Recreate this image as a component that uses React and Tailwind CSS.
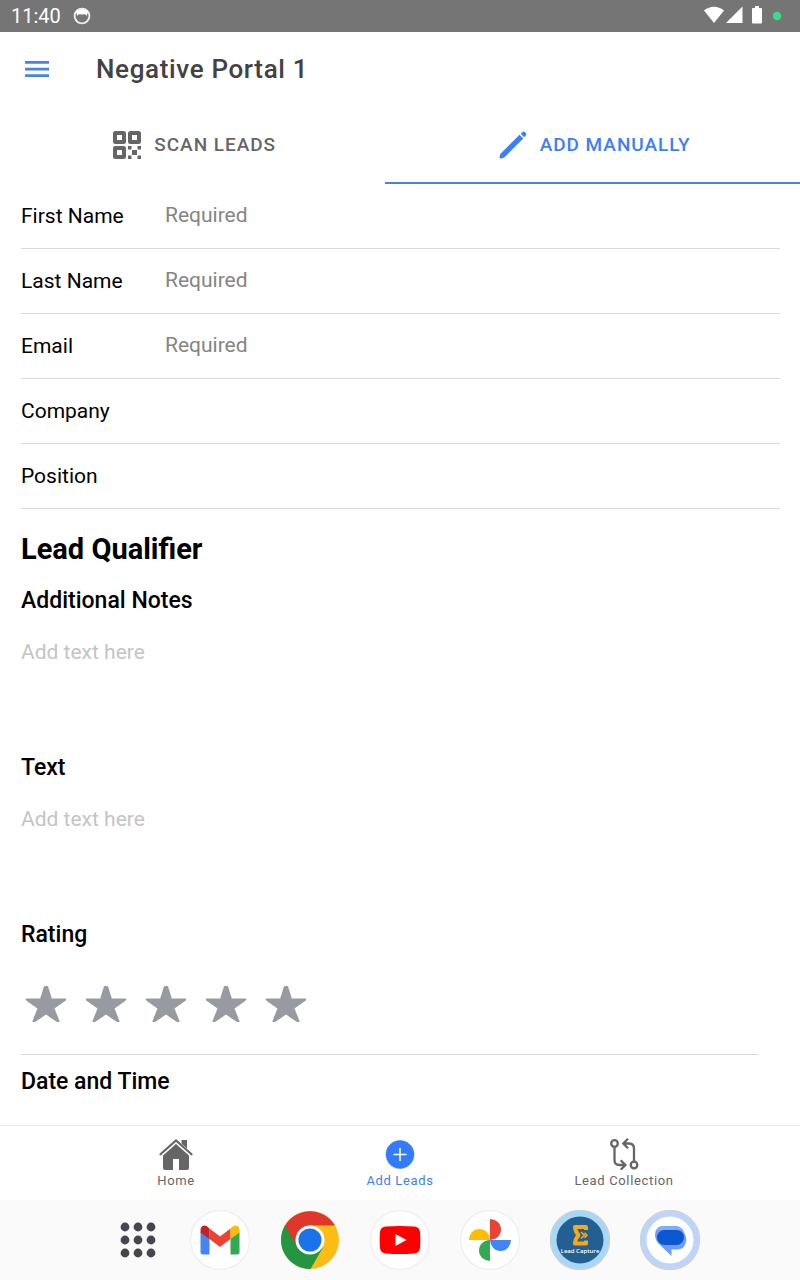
import { useState } from 'react';

const FIELDS = [
  { id: 'firstName', label: 'First Name', placeholder: 'Required', type: 'text' },
  { id: 'lastName', label: 'Last Name', placeholder: 'Required', type: 'text' },
  { id: 'email', label: 'Email', placeholder: 'Required', type: 'email' },
  { id: 'company', label: 'Company', placeholder: '', type: 'text' },
  { id: 'position', label: 'Position', placeholder: '', type: 'text' }
];

const StatusBar = () => (
  <div className="flex h-8 shrink-0 items-center bg-[#757575] pr-4 pl-[11px] text-white">
    <span className="text-[20px] leading-6">11:40</span>
    <svg className="ml-[11px] h-5 w-5" viewBox="0 0 20 20" fill="none">
      <circle cx="10" cy="10" r="7.4" stroke="#ececec" strokeWidth="1.9" />
      <path d="M4 5.500Q10 .5 16 5.500L14.800 10Q14 8 12.500 8.200L10 8.500 7.500 8.200Q6 8 5.200 10Z" fill="#fff" />
    </svg>
    <svg className="ml-auto h-5 w-20" viewBox="0 0 80 20" fill="#fff">
      <path d="M0 4.500Q10 -3 20 4.500L10 17Z" />
      <path d="M38.500 0.500v16.500H22Z" />
      <path d="M51 0h4v2h2q1 0 1 1v13.500q0 1-1 1h-8q-1 0-1-1V3q0-1 1-1h2Z" />
      <circle cx="73" cy="10" r="4.200" fill="#3ddc84" />
    </svg>
  </div>
);

const Header = () => (
  <header className="flex h-[74px] shrink-0 items-center px-[25px]">
    <button type="button" aria-label="Menu" className="text-[#4a80ee]">
      <svg className="h-6 w-6" viewBox="0 0 24 24" fill="currentColor">
        <path d="M0 4h24v2.700H0zM0 10.700h24v2.700H0zM0 17.300h24V20H0z" />
      </svg>
    </button>
    <h1 className="ml-[47px] text-[26px] leading-8 font-medium tracking-wide text-[#424242]">Negative Portal 1</h1>
  </header>
);

const QrIcon = () => (
  <svg className="h-7 w-7" viewBox="0 0 28 28" fill="currentColor" fillRule="evenodd">
    <path d="M2.500 0h8A2.500 2.500 0 0 1 13 2.500v8a2.500 2.500 0 0 1-2.500 2.500h-8A2.500 2.500 0 0 1 0 10.500v-8A2.500 2.500 0 0 1 2.500 0ZM4 4v5h5V4Z" />
    <path d="M17.500 0h8A2.500 2.500 0 0 1 28 2.500v8a2.500 2.500 0 0 1-2.500 2.500h-8a2.500 2.500 0 0 1-2.500-2.500v-8A2.500 2.500 0 0 1 17.500 0ZM19 4v5h5V4Z" />
    <path d="M2.500 15h8a2.500 2.500 0 0 1 2.500 2.500v8a2.500 2.500 0 0 1-2.500 2.500h-8A2.500 2.500 0 0 1 0 25.500v-8A2.500 2.500 0 0 1 2.500 15ZM4 19v5h5v-5Z" />
    <path d="M15 15h3.500v3.500H15zM24.500 15H28v3.500h-3.500zM19 19h5v5h-5zM15 24.500h3.500V28H15zM24.500 24.500H28V28h-3.500z" />
  </svg>
);

const PencilIcon = () => (
  <svg className="h-7 w-7" viewBox="0 0 28 28" fill="currentColor">
    <path d="M20.500 3.700 24.300 7.500 5.300 26.500 2.500 27.500Q.2 28 .6 25.600L1.500 22.700Z" />
    <path d="M21.700 2.800 23 1.500a2.300 2.300 0 0 1 3.400 0 2.300 2.300 0 0 1 0 3.400L25.200 6.300Z" />
  </svg>
);

const Tabs = ({ active, onChange }) => {
  const base = 'flex flex-auto items-center justify-center gap-[13px] border-b-2 pt-0.5 pl-1 text-[19px] font-medium uppercase tracking-wider';
  return (
    <div role="tablist" className="flex h-[78px] shrink-0">
      <button
        type="button"
        role="tab"
        aria-selected={active === 'scan'}
        onClick={() => onChange('scan')}
        className={`${base} ${active === 'scan' ? 'border-[#4a80e0] text-[#3f7ff5]' : 'border-transparent text-[#666666]'}`}
      >
        <QrIcon />
        Scan Leads
      </button>
      <button
        type="button"
        role="tab"
        aria-selected={active === 'manual'}
        onClick={() => onChange('manual')}
        className={`${base} ${active === 'manual' ? 'border-[#4a80e0] text-[#3f7ff5]' : 'border-transparent text-[#666666]'}`}
      >
        <PencilIcon />
        Add Manually
      </button>
    </div>
  );
};

const Field = ({ id, label, placeholder, type }) => (
  <div className="flex h-[65px] items-center border-b border-[#dadada]">
    <label htmlFor={id} className="w-36 shrink-0 text-[21px] leading-7">{label}</label>
    <input
      id={id}
      type={type}
      placeholder={placeholder}
      className="min-w-0 flex-1 pb-0.5 text-[21px] leading-7 outline-none placeholder:text-[#858585]"
    />
  </div>
);

const Notes = ({ id, label }) => (
  <div>
    <h3 className="text-[23px] leading-8 font-medium">
      <label htmlFor={id}>{label}</label>
    </h3>
    <textarea
      id={id}
      placeholder="Add text here"
      className="block h-[135px] w-full resize-none pt-[21px] text-[21px] leading-7 outline-none placeholder:text-[#c4c4c6]"
    />
  </div>
);

const Rating = ({ value, onChange }) => (
  <div className="mt-[35px] mr-[22px] flex gap-[18px] border-b border-[#dadada] pb-8 pl-1">
    {[1, 2, 3, 4, 5].map((n) => (
      <button
        key={n}
        type="button"
        aria-label={`${n} stars`}
        onClick={() => onChange(n)}
        className={n <= value ? 'text-[#3f7ff5]' : 'text-[#989aa2]'}
      >
        <svg className="h-9 w-[42px]" viewBox="0 0 42 36" fill="currentColor">
          <path d="M19.500 0h3l.8 1.200L26.800 12.500H40.500q1.200.3.700 1.500l-1.400 1.300L29.500 22.500 34.500 35v1H32L21 28.600 10 36H7.500V35L12.500 22.500 2.200 15.300.8 14Q.3 12.800 1.500 12.500H15.200L18.700 1.200Z" />
        </svg>
      </button>
    ))}
  </div>
);

const HomeIcon = () => (
  <svg className="h-8 w-[34px]" viewBox="0 0 34 32" fill="currentColor">
    <path d="M4 17 17 5.300 30 17v13q0 2-2 2H20V21h-6v11H6Q4 32 4 30Z" />
    <path d="M22.500 2H28v10L22.500 6.500Z" />
    <path d="M1.500 17 17 3.300 32.500 17" fill="none" stroke="#fff" strokeWidth="4" />
    <path d="M1.500 16.300 17 2.500 32.500 16.300" fill="none" stroke="currentColor" strokeWidth="2.200" strokeLinecap="round" />
  </svg>
);

const AddIcon = () => (
  <svg className="h-8 w-8" viewBox="0 0 32 32">
    <circle cx="16" cy="16.500" r="14" fill="#347bfb" stroke="#347bfb" strokeWidth=".8" strokeDasharray="1.500 1" />
    <path d="M16 10v13M9.500 16.500h13" stroke="#fff" strokeWidth="1.500" />
  </svg>
);

const CollectionIcon = () => (
  <svg className="h-8 w-8" viewBox="0 0 32 32" fill="none" stroke="currentColor" strokeWidth="2.300">
    <circle cx="6.500" cy="5.500" r="3.300" />
    <circle cx="26" cy="27" r="3.300" />
    <path d="M6.500 9v13q0 5 5 5H17M26 23.500v-13q0-5-5-5H15.500M20 .8 15.300 5.500 20 10.200M12.700 22.300 17.400 27 12.700 31.700" />
  </svg>
);

const BottomNav = () => {
  const item = 'flex flex-col items-center text-[13px] leading-4 tracking-wider';
  return (
    <nav className="grid h-[75px] shrink-0 grid-cols-3 border-t border-[#e6e6e6] px-16 pt-3">
      <a href="#home" className={`${item} text-[#666666]`}>
        <HomeIcon />
        <span className="mt-[3px]">Home</span>
      </a>
      <a href="#add" aria-current="page" className={`${item} text-[#3f7ff5]`}>
        <AddIcon />
        <span className="mt-[3px]">Add Leads</span>
      </a>
      <a href="#collection" className={`${item} text-[#666666]`}>
        <CollectionIcon />
        <span className="mt-[3px]">Lead Collection</span>
      </a>
    </nav>
  );
};

const AppsIcon = () => (
  <svg className="h-9 w-9" viewBox="0 0 36 36" fill="#46464f">
    {[5, 18, 31].map((cy) => [5, 18, 31].map((cx) => <circle key={`${cx}-${cy}`} cx={cx} cy={cy} r="4.400" />))}
  </svg>
);

const GmailIcon = () => (
  <svg className="h-full w-full" viewBox="0 0 60 60">
    <circle cx="30" cy="30" r="29.500" fill="#fff" stroke="#f0f0f0" strokeWidth="1.500" />
    <path d="M10.500 22v20q0 2.500 2.500 2.500h6.500V27Z" fill="#4285f4" />
    <path d="M40.500 27v17.500H47q2.500 0 2.500-2.500V22Z" fill="#34a853" />
    <path d="M19.500 18.500 30 26.500l10.500-8V29L30 37 19.500 29Z" fill="#ea4335" />
    <path d="M10.500 20c0-5 5-6 8-2.300l1 .8V29l-9-6.500Z" fill="#c5221f" />
    <path d="M49.500 20c0-5-5-6-8-2.300l-1 .8V29l9-6.500Z" fill="#fbbc04" />
  </svg>
);

const ChromeIcon = () => (
  <svg className="h-full w-full" viewBox="0 0 60 60">
    <circle cx="30" cy="30" r="29" fill="#fbbc14" />
    <path d="M30 30 5 15.300A29 29 0 0 0 30.500 59L43 37.500Z" fill="#24963f" />
    <path d="M5 15.500A29 29 0 0 1 55 15.500H30V30l-12.600 7.200Z" fill="#e0372c" />
    <circle cx="30" cy="30" r="14.500" fill="#fff" />
    <circle cx="30" cy="30" r="11.500" fill="#1a73e8" />
  </svg>
);

const YoutubeIcon = () => (
  <svg className="h-full w-full" viewBox="0 0 60 60">
    <circle cx="30" cy="30" r="29.500" fill="#fff" stroke="#f0f0f0" strokeWidth="1.500" />
    <path d="M16 16.500Q30 15.500 44 16.500q5.500.3 6 5.500.8 8 0 16-.5 5.200-6 5.500-14 1-28 0-5.500-.3-6-5.500-.8-8 0-16 .5-5.200 6-5.500Z" fill="#f00" />
    <path d="M25.500 24v12L36.500 30Z" fill="#fff" />
  </svg>
);

const PhotosIcon = () => (
  <svg className="h-full w-full" viewBox="0 0 60 60">
    <circle cx="30" cy="30" r="29.500" fill="#fff" stroke="#f0f0f0" strokeWidth="1.500" />
    <path d="M30 9a11 10.500 0 0 1 0 21Z" fill="#ea4335" />
    <path d="M9 30a10.500 11 0 0 1 21 0Z" fill="#fbbc04" />
    <path d="M51 30a10.500 11 0 0 1-21 0Z" fill="#4285f4" />
    <path d="M30 51a11 10.500 0 0 1 0-21Z" fill="#34a853" />
  </svg>
);

const LeadCaptureIcon = () => (
  <svg className="h-full w-full" viewBox="0 0 60 60">
    <circle cx="30" cy="30" r="29.500" fill="#a6d8fa" stroke="#c8d2d8" strokeWidth="1.500" />
    <circle cx="30" cy="30" r="23.500" fill="#245f91" />
    <path
      d="M36 20v-3H25q0 4 3.500 8.300Q25 29.500 25 33.500h11v-3"
      fill="none"
      stroke="#f5a81c"
      strokeWidth="4"
      strokeLinejoin="round"
    />
    <path d="M31 22 34.500 25.300 31 28.500M34.500 22.800l2.500 2.500-2.500 2.500" fill="none" stroke="#f5a81c" strokeWidth="1.600" />
    <text x="30" y="43" textAnchor="middle" fontSize="6" fontFamily="Open Sans, sans-serif" fontWeight="600" fill="#fff">Lead Capture</text>
  </svg>
);

const MessagesIcon = () => (
  <svg className="h-full w-full" viewBox="0 0 60 60">
    <circle cx="30" cy="30" r="29.500" fill="#bed5fb" stroke="#cbd3df" strokeWidth="1.500" />
    <circle cx="30" cy="30" r="23.500" fill="#fff" />
    <path d="M24 16H35Q42 16 44 22.500 47 27 46 32q-1.500 7.500-9 7.500H31.500V46L21 36Q15 31 15 25 15 16 24 16Z" fill="#6f9bf6" />
    <rect x="17" y="20" width="27" height="15" rx="7.500" fill="#0b57d0" />
    <path d="M24 16H35Q40 16 42.500 20H17Q19 16 24 16Z" fill="#82adfb" />
  </svg>
);

const DOCK = [
  { name: 'Gmail', Icon: GmailIcon },
  { name: 'Chrome', Icon: ChromeIcon },
  { name: 'YouTube', Icon: YoutubeIcon },
  { name: 'Photos', Icon: PhotosIcon },
  { name: 'Lead Capture', Icon: LeadCaptureIcon },
  { name: 'Messages', Icon: MessagesIcon }
];

const Dock = () => (
  <div className="flex h-20 shrink-0 items-center justify-center gap-[30px] bg-[#fafafa] pl-4">
    <button type="button" aria-label="All apps" className="flex w-11 justify-center">
      <AppsIcon />
    </button>
    {DOCK.map(({ name, Icon }) => (
      <button key={name} type="button" aria-label={name} className="h-[60px] w-[60px]">
        <Icon />
      </button>
    ))}
  </div>
);

export default function App() {
  const [tab, setTab] = useState('manual');
  const [rating, setRating] = useState(0);

  return (
    <div className="flex h-screen flex-col bg-white font-[Roboto,sans-serif] text-black">
      <StatusBar />
      <Header />
      <Tabs active={tab} onChange={setTab} />
      <main className="min-h-0 flex-1 overflow-y-auto pr-5 pl-[21px]">
        {FIELDS.map((field) => (
          <Field key={field.id} {...field} />
        ))}
        <h2 className="mt-5 mb-4 text-[29px] leading-10 font-bold">Lead Qualifier</h2>
        <Notes id="additionalNotes" label="Additional Notes" />
        <Notes id="text" label="Text" />
        <h3 className="text-[23px] leading-8 font-medium">Rating</h3>
        <Rating value={rating} onChange={setRating} />
        <h3 className="mt-[11px] text-[23px] leading-8 font-medium">Date and Time</h3>
      </main>
      <BottomNav />
      <Dock />
    </div>
  );
}
